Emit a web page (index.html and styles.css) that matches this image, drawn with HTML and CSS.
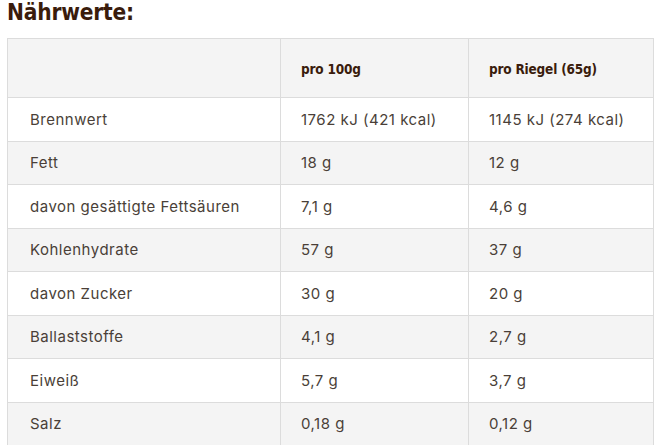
FILE: index.html
```html
<!DOCTYPE html>
<html lang="de">
<head>
<meta charset="utf-8">
<link rel="stylesheet" href="styles.css">
</head>
<body>
<div class="page">
  <h2 class="title">Nährwerte:</h2>
  <table class="nutri">
    <thead>
      <tr><th></th><th>pro 100g</th><th>pro Riegel (65g)</th></tr>
    </thead>
    <tbody>
      <tr><td>Brennwert</td><td>1762 kJ (421 kcal)</td><td>1145 kJ (274 kcal)</td></tr>
      <tr><td>Fett</td><td>18 g</td><td>12 g</td></tr>
      <tr><td>davon gesättigte Fettsäuren</td><td>7,1 g</td><td>4,6 g</td></tr>
      <tr><td>Kohlenhydrate</td><td>57 g</td><td>37 g</td></tr>
      <tr><td>davon Zucker</td><td>30 g</td><td>20 g</td></tr>
      <tr><td>Ballaststoffe</td><td>4,1 g</td><td>2,7 g</td></tr>
      <tr><td>Eiweiß</td><td>5,7 g</td><td>3,7 g</td></tr>
      <tr><td>Salz</td><td>0,18 g</td><td>0,12 g</td></tr>
    </tbody>
  </table>
</div>
</body>
</html>
```
FILE: styles.css
```css
html, body { margin: 0; padding: 0; background: #fff; }
.page { padding: 0 0 0 7px; width: 648px; overflow: hidden; }
.title {
  margin: 0;
  height: 38px;
  font-family: "DejaVu Sans Condensed", "DejaVu Sans", sans-serif;
  font-stretch: condensed;
  font-weight: bold;
  font-size: 22.5px;
  line-height: 24px;
  color: #3a1c0c;
  letter-spacing: -0.2px;
}
.nutri {
  width: 647px;
  border-collapse: collapse;
  table-layout: fixed;
  font-family: "Inter", sans-serif;
  font-size: 15px;
  letter-spacing: 0.5px;
  color: #4a3f38;
}
.nutri th, .nutri td {
  border: 1px solid #dcdcdc;
  text-align: left;
  padding: 0 0 0 20px;
  vertical-align: middle;
}
.nutri th:first-child, .nutri td:first-child { width: 250px; padding-left: 22px; }
.nutri th:nth-child(2), .nutri td:nth-child(2) { width: 167px; }
.nutri thead tr { height: 59px; background: #f4f4f4; }
.nutri th {
  font-family: "DejaVu Sans Condensed", "DejaVu Sans", sans-serif;
  font-stretch: condensed;
  font-weight: bold;
  font-size: 13.5px;
  letter-spacing: -0.2px;
  color: #3a1c0c;
  padding-top: 2px;
}
.nutri tbody tr { height: 43.5px; }
.nutri tbody tr:nth-child(even) { background: #f4f4f4; }
```
